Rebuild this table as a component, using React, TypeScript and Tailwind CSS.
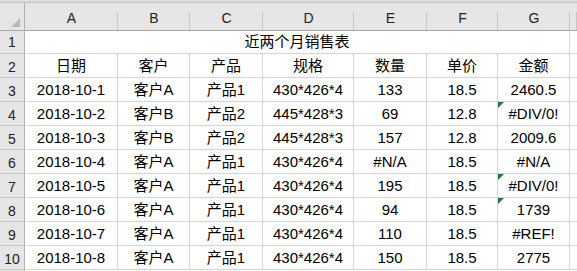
import React from "react";

const cols = ["A", "B", "C", "D", "E", "F", "G", ""];

const data: string[][] = [
  ["日期", "客户", "产品", "规格", "数量", "单价", "金额"],
  ["2018-10-1", "客户A", "产品1", "430*426*4", "133", "18.5", "2460.5"],
  ["2018-10-2", "客户B", "产品2", "445*428*3", "69", "12.8", "#DIV/0!"],
  ["2018-10-3", "客户B", "产品2", "445*428*3", "157", "12.8", "2009.6"],
  ["2018-10-4", "客户A", "产品1", "430*426*4", "#N/A", "18.5", "#N/A"],
  ["2018-10-5", "客户A", "产品1", "430*426*4", "195", "18.5", "#DIV/0!"],
  ["2018-10-6", "客户A", "产品1", "430*426*4", "94", "18.5", "1739"],
  ["2018-10-7", "客户A", "产品1", "430*426*4", "110", "18.5", "#REF!"],
  ["2018-10-8", "客户A", "产品1", "430*426*4", "150", "18.5", "2775"],
];

const flagged = new Set(["2-6", "5-6", "6-6"]);

const font = { fontFamily: '"Liberation Sans", "Noto Sans CJK SC", sans-serif' };

const grid =
  "grid grid-cols-[25px_93px_72px_73px_91px_73px_71px_72px_1fr]";

export default function App() {
  return (
    <div
      className="w-[577px] h-[271px] overflow-hidden bg-white text-black"
      style={font}
    >
      <div className="h-[3px] bg-[#dcdcdc] border-b border-[#c4c4c4]" />
      {/* column headers */}
      <div className={`${grid} h-[28px] bg-[#e6e6e6] border-b border-[#a8a8a8]`}>
        <div className="relative border-r border-[#b3b3b3]">
          <div className="absolute right-[4px] bottom-[3px] w-[9px] h-[9px] bg-[#b8b8b8] [clip-path:polygon(100%_0,100%_100%,0_100%)]" />
        </div>
        {cols.map((c, i) => (
          <div
            key={i}
            className="relative flex items-center justify-center pt-[3px] text-[14px] text-[#222] after:absolute after:right-0 after:top-[9px] after:bottom-0 after:w-px after:bg-[#c6c6c6]"
          >
            {c}
          </div>
        ))}
      </div>
      {/* row 1 */}
      <div className={`${grid} h-[23px] border-b border-[#d4d4d4]`}>
        <div className="bg-[#e6e6e6] border-r border-[#b3b3b3] flex items-end justify-center text-[14px] text-[#222] -mb-px border-b border-b-[#c6c6c6]">
          1
        </div>
        <div className="col-span-7 border-r border-[#d4d4d4] flex items-end justify-center text-[15px] leading-[20px] pb-[1px]">
          近两个月销售表
        </div>
        <div />
      </div>
      {data.map((row, r) => (
        <div key={r} className={`${grid} h-[24px] border-b border-[#d4d4d4]`}>
          <div className="bg-[#e6e6e6] border-r border-[#b3b3b3] flex items-end justify-center text-[14px] leading-[20px] text-[#222] -mb-px border-b border-b-[#c6c6c6]">
            {r + 2}
          </div>
          {row.map((v, c) => (
            <div
              key={c}
              className="relative border-r border-[#d4d4d4] flex items-end justify-center text-[15px] leading-[20px] pb-[1px] whitespace-nowrap"
            >
              {flagged.has(`${r}-${c}`) && (
                <div className="absolute left-0 top-0 w-[6px] h-[6px] bg-[#1e7b34] [clip-path:polygon(0_0,100%_0,0_100%)]" />
              )}
              {v}
            </div>
          ))}
          <div />
        </div>
      ))}
      <div className={`${grid} h-[10px]`}>
        <div className="bg-[#e6e6e6] border-r border-[#b3b3b3]" />
      </div>
    </div>
  );
}
